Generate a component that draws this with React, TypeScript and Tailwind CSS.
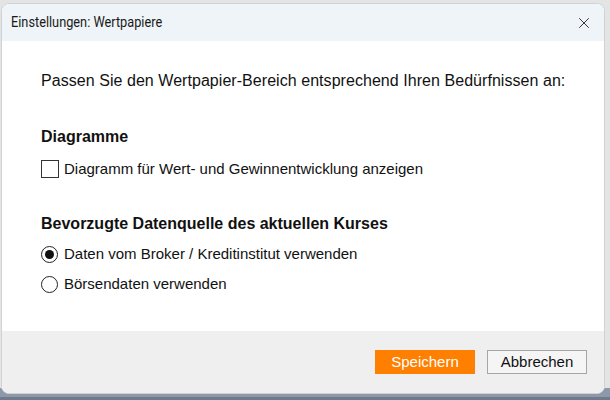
import { X } from "lucide-react";

const body = { fontFamily: '"Liberation Sans", Arial, sans-serif' };

export default function App() {
  return (
    <div className="w-[610px] h-[400px] overflow-hidden bg-[linear-gradient(to_bottom,#e4e4e4_0,#e4e4e4_388px,#8d99aa_388px,#8d99aa_397px,#6f7b8c_397px)] pt-[3px] pl-px">
      <div className="w-[604px] h-[391px] flex flex-col rounded-lg overflow-hidden border border-[#cfd3d6] bg-white">
        {/* titelleiste */}
        <div className="h-[37px] shrink-0 flex items-center justify-between bg-[#eef4f7] pl-[9px] pr-[11px]">
          <span
            className="inline-block origin-left scale-x-[0.85] text-[15px] text-[#1a1a1a]"
            style={{ fontFamily: 'Roboto, "Noto Sans", sans-serif' }}
          >
            Einstellungen: Wertpapiere
          </span>
          <X size={18} strokeWidth={1.2} className="text-[#222]" />
        </div>

        {/* inhalt */}
        <div className="flex-1 pl-[39px] pt-[31px] text-[#111]" style={body}>
          <p className="text-[16px] leading-[18px] tracking-[0.05px]">
            Passen Sie den Wertpapier-Bereich entsprechend Ihren Bedürfnissen an:
          </p>

          <h2 className="mt-[38px] text-[16px] leading-[18px] font-bold">Diagramme</h2>
          <label className="mt-[14px] flex items-center h-[18px] text-[15px]">
            <span className="w-[18px] h-[18px] border border-[#333] bg-white shrink-0" />
            <span className="ml-[5px]">Diagramm für Wert- und Gewinnentwicklung anzeigen</span>
          </label>

          <h2 className="mt-[37px] text-[16px] leading-[18px] font-bold">
            Bevorzugte Datenquelle des aktuellen Kurses
          </h2>
          <label className="mt-[12px] flex items-center h-[18px] text-[15px]">
            <span className="w-[17px] h-[17px] rounded-full border border-[#222] flex items-center justify-center shrink-0">
              <span className="w-[9px] h-[9px] rounded-full bg-[#111]" />
            </span>
            <span className="ml-[6px]">Daten vom Broker / Kreditinstitut verwenden</span>
          </label>
          <label className="mt-[12px] flex items-center h-[18px] text-[15px]">
            <span className="w-[17px] h-[17px] rounded-full border border-[#222] shrink-0" />
            <span className="ml-[6px]">Börsendaten verwenden</span>
          </label>
        </div>

        {/* fußleiste */}
        <div className="h-[62px] shrink-0 bg-[#efefef] flex items-center justify-end gap-[12px] pr-[17px]" style={body}>
          <button className="w-[100px] h-[24px] bg-[#ff7f00] text-white text-[15px]">Speichern</button>
          <button className="w-[100px] h-[24px] bg-[#f5f5f5] border border-[#a6a6a6] text-[#111] text-[15px]">
            Abbrechen
          </button>
        </div>
      </div>
    </div>
  );
}
